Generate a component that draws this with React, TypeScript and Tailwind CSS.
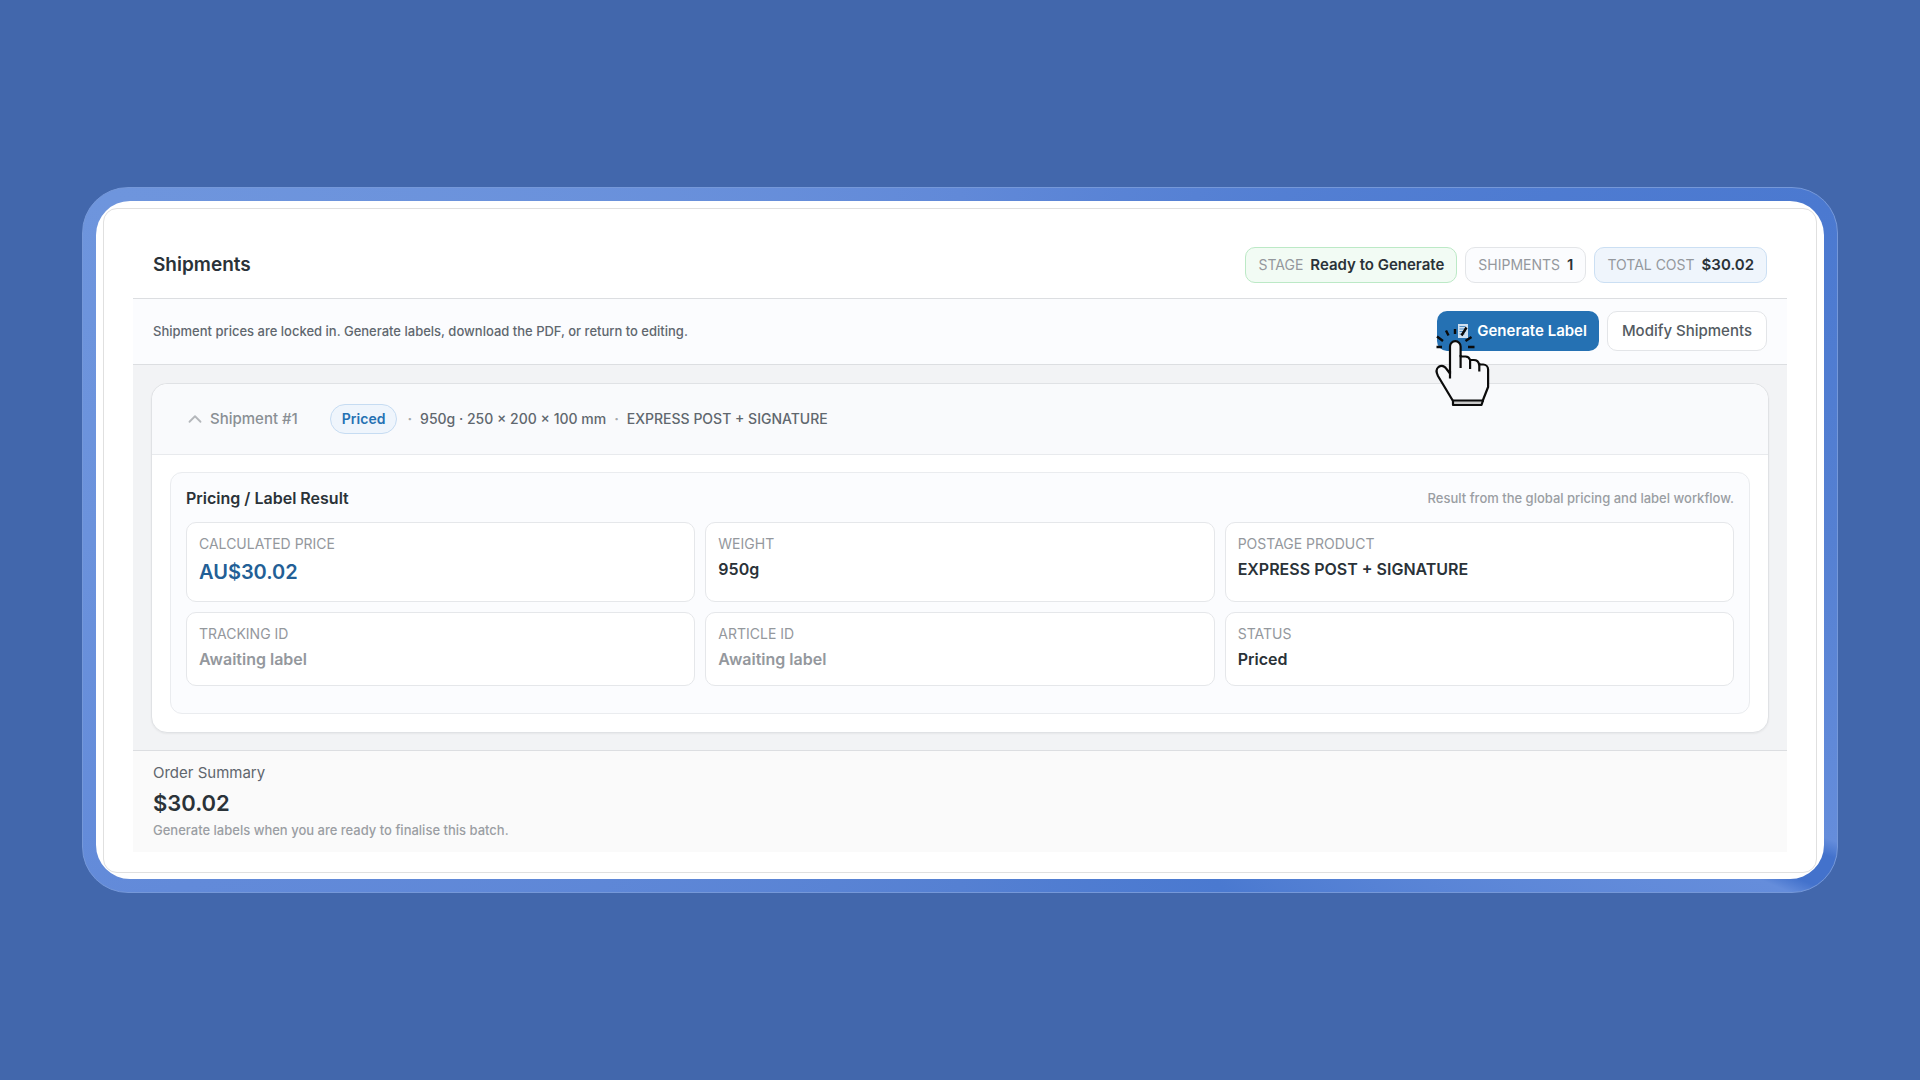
import { ChevronUp } from 'lucide-react';

type Tone = 'green' | 'plain' | 'blue';

const BADGE_TONES: Record<Tone, string> = {
  green: 'bg-[#f2fbf4] border-[#bce9c6]',
  plain: 'bg-[#fbfcfe] border-[#e3e5e8]',
  blue: 'bg-[#eff5fc] border-[#cbdff3]',
};

const BADGES: { label: string; value: string; tone: Tone }[] = [
  { label: 'STAGE', value: 'Ready to Generate', tone: 'green' },
  { label: 'SHIPMENTS', value: '1', tone: 'plain' },
  { label: 'TOTAL COST', value: '$30.02', tone: 'blue' },
];

const RESULTS = [
  { label: 'CALCULATED PRICE', value: 'AU$30.02', style: 'text-xl leading-[30px] text-[#235f96]' },
  { label: 'WEIGHT', value: '950g', style: 'text-base leading-6 text-[#2a3238]' },
  { label: 'POSTAGE PRODUCT', value: 'EXPRESS POST + SIGNATURE', style: 'text-base leading-6 text-[#2a3238]' },
  { label: 'TRACKING ID', value: 'Awaiting label', style: 'text-base leading-6 text-[#94989d]' },
  { label: 'ARTICLE ID', value: 'Awaiting label', style: 'text-base leading-6 text-[#94989d]' },
  { label: 'STATUS', value: 'Priced', style: 'text-base leading-6 text-[#2a3238]' },
];

function LabelIcon() {
  return (
    <svg width="12" height="16" viewBox="0 0 12 16" fill="none" aria-hidden="true">
      <path d="M1 1h10v14H1z" fill="#cfe0f1" />
      <path d="M2.500 3.500h6M2.500 6h6M2.500 8.500h6M2.500 11h5" stroke="#4f8cc2" strokeWidth="1" />
    </svg>
  );
}

function ClickHand() {
  return (
    <svg
      className="pointer-events-none absolute -top-0.5 -left-4 z-10"
      width="100"
      height="110"
      viewBox="0 0 100 110"
      fill="none"
      stroke="#0b0b0b"
      strokeWidth="2.2"
      strokeLinejoin="round"
      aria-hidden="true"
    >
      {/* click rays */}
      <path
        d="M15.500 38h5.500M16 27.500l6 4.500M25 21.500l2.500 5M34 20v5M45.500 18.500l-5 8M50.500 28l-6 4M47 38h6.500"
        strokeWidth="2.400"
      />
      {/* hand */}
      <path
        d="M29 37.500a5.300 5.300 0 0 1 10.600 0V47.500h4.500a5 5 0 0 1 5 3.500h3.500a5.500 5.500 0 0 1 5.500 4.500h4a5 5 0 0 1 5 5V78l-5.500 14H32L17 67c-2-4-2-7 .5-9 3-2 6-1 8 2l3.500 4.500z"
        fill="#f7f8fa"
      />
      <path d="M29 62v7.500M39.600 46v13M49.100 50v10M58.300 54v8.500" />
      {/* cuff */}
      <path d="M32 91.500h30L60.500 96H32z" fill="#c9c9c9" />
    </svg>
  );
}

function Header() {
  return (
    <header className="flex items-center justify-between border-b border-[#dcdee1] px-5 pb-[15px]">
      <h1 className="text-[19px] font-semibold text-[#2a3238]">Shipments</h1>
      <div className="flex gap-2">
        {BADGES.map(badge => (
          <div
            key={badge.label}
            className={`flex h-9 items-center gap-[7px] rounded-[10px] border px-3 ${BADGE_TONES[badge.tone]}`}
          >
            <span className="text-sm text-[#94989d]">{badge.label}</span>
            <span className="text-[15px] font-semibold text-[#2a3238]">{badge.value}</span>
          </div>
        ))}
      </div>
    </header>
  );
}

function ActionBar() {
  return (
    <div className="flex items-center justify-between border-b border-[#dcdee1] bg-[#fbfcfe] px-5 pt-3 pb-[13px]">
      <p className="text-[13px] leading-5 font-medium text-[#60676e]">
        Shipment prices are locked in. Generate labels, download the PDF, or return to editing.
      </p>
      <div className="flex gap-2">
        <div className="relative">
          <button
            type="button"
            className="flex h-10 items-center gap-2 rounded-[10px] bg-[#2571b3] pr-3 pl-5 text-[15px] font-semibold text-white"
          >
            <LabelIcon />
            Generate Label
          </button>
          <ClickHand />
        </div>
        <button
          type="button"
          className="h-10 rounded-[10px] border border-[#e3e5e8] bg-white px-[14px] text-[15px] font-medium text-[#545b62]"
        >
          Modify Shipments
        </button>
      </div>
    </div>
  );
}

function ShipmentCard() {
  return (
    <section className="rounded-2xl border border-[#e0e2e5] bg-white shadow-xs">
      <div className="flex h-[71px] items-center rounded-t-2xl border-b border-[#e8eaed] bg-[#f9fafc] px-8 text-sm text-[#545b62]">
        <button type="button" className="flex items-center gap-1 text-[15px] font-medium text-[#8a8f94]">
          <ChevronUp size={22} strokeWidth={2} className="text-[#b4b7bb]" />
          Shipment #1
        </button>
        <span className="ml-8 flex h-[30px] items-center rounded-full border border-[#c6dcf2] bg-[#eff5fc] px-[11px] font-semibold text-[#2571b3]">
          Priced
        </span>
        <span className="ml-[10px] font-bold text-[#a5a9ad]">·</span>
        <span className="ml-2 font-medium text-[#60676e]">950g · 250 × 200 × 100 mm</span>
        <span className="ml-2 font-bold text-[#a5a9ad]">·</span>
        <span className="ml-2 font-medium text-[#60676e]">EXPRESS POST + SIGNATURE</span>
      </div>

      <div className="px-[18px] pt-[17px] pb-[18px]">
        <div className="rounded-xl border border-[#eaecef] bg-[#fbfcfe] px-[15px] pt-[15px] pb-[27px]">
          <div className="mb-[14px] flex items-center justify-between">
            <h2 className="text-base leading-5 font-semibold text-[#2a3238]">Pricing / Label Result</h2>
            <p className="text-[13px] leading-5 font-medium text-[#9a9ea3]">
              Result from the global pricing and label workflow.
            </p>
          </div>
          <dl className="grid grid-cols-3 gap-[10px]">
            {RESULTS.map(item => (
              <div key={item.label} className="rounded-[10px] border border-[#e5e7ea] bg-white px-3 pt-[11px] pb-[14px]">
                <dt className="text-sm text-[#94989d]">{item.label}</dt>
                <dd className={`mt-[3px] font-semibold ${item.style}`}>{item.value}</dd>
              </div>
            ))}
          </dl>
        </div>
      </div>
    </section>
  );
}

function OrderSummary() {
  return (
    <footer className="border-t border-[#dcdee1] bg-[#fafafa] px-5 py-3">
      <p className="text-[15px] leading-5 text-[#5f666d]">Order Summary</p>
      <p className="mt-[6px] mb-[3px] text-[22px] leading-7 font-semibold text-[#2a3238]">$30.02</p>
      <p className="text-[13px] leading-5 font-medium text-[#9a9ea3]">
        Generate labels when you are ready to finalise this batch.
      </p>
    </footer>
  );
}

export default function App() {
  return (
    <div className="flex min-h-screen items-center justify-center bg-[#4267ac] px-[82px] font-['Inter',sans-serif]">
      {/* glassy frame, light sweeps around the edge */}
      <div className="w-full rounded-[46px] border border-[#7598d9] bg-[conic-gradient(#6189d8_0deg,#4b79d0_69deg,#5580d2_90deg,#658ddb_109deg,#4372cc_110deg,#4372cc_112deg,#658ddb_113deg,#4a79d0_143deg,#5580d2_180deg,#628ad9_246deg,#6b92dc_270deg,#6e95dd_292deg,#6189d8_360deg)] p-[13px]">
        <main className="rounded-[34px] bg-white p-[7px] pb-[6px]">
          <div className="rounded-[14px] border border-[#e0e0e0] px-[29px] pt-[38px] pb-5">
            <Header />
            <ActionBar />
            <div className="bg-[#f2f3f5] px-[18px] pt-[18px] pb-[17px]">
              <ShipmentCard />
            </div>
            <OrderSummary />
          </div>
        </main>
      </div>
    </div>
  );
}
